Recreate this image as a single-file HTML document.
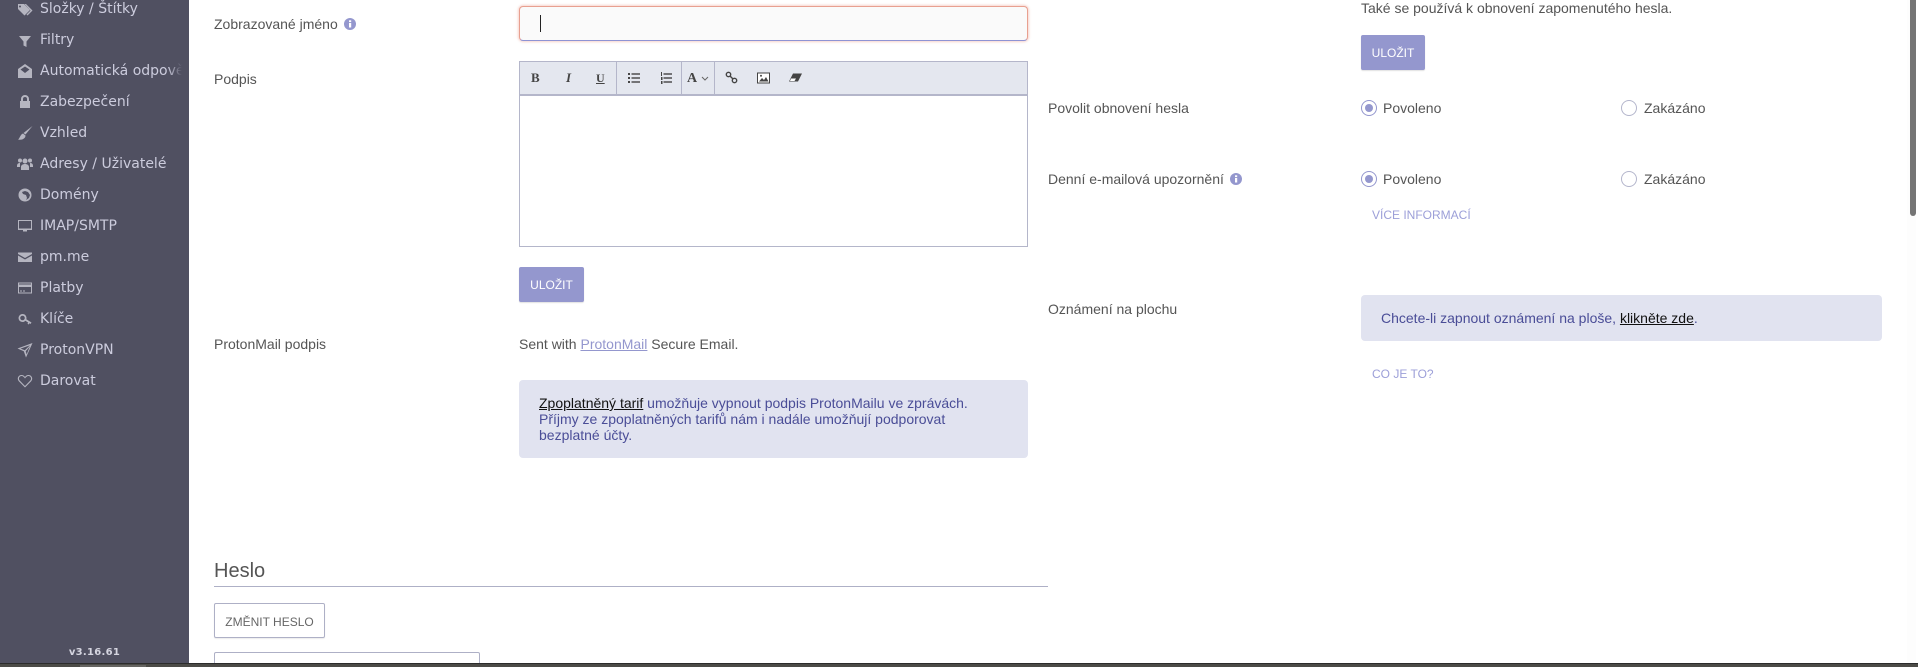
<!DOCTYPE html>
<html lang="cs"><head><meta charset="utf-8"><title>Nastavení</title>
<style>
html,body{margin:0;padding:0;width:1918px;height:667px;overflow:hidden;background:#fff}
body{position:relative;font-family:"Liberation Sans",sans-serif;font-size:14px;color:#555}
.a{position:absolute;white-space:nowrap}
#side{position:absolute;left:0;top:0;width:189px;height:663px;background:#505061;overflow:hidden}
.n{position:absolute;left:40px;font-family:"DejaVu Sans",sans-serif;font-size:14px;line-height:18px;color:#ccd;white-space:nowrap}
.i{position:absolute;left:17px;width:16px;height:16px;fill:#b5b5c0}
.t{line-height:16px}
.btn{position:absolute;background:#9497ce;color:#fff;font-size:12px;text-align:center;border-radius:2px;box-shadow:0 1px 1px rgba(0,0,0,.12)}
.ban{position:absolute;background:#e1e3f0;border-radius:4px;color:#4a4d97;line-height:16px}
.ban u{color:#111}
.r{position:absolute;width:14px;height:14px;border:1px solid #b4b6cc;border-radius:50%;background:#fff}
.r.on{border-color:#9497ce}
.r.on:after{content:"";position:absolute;left:3px;top:3px;width:8px;height:8px;border-radius:50%;background:#9497ce}
.l{color:#9c9fd8;font-size:12px;line-height:14px}
.tb{position:absolute;top:62px;height:32px;width:1px;background:#b4b6ca}
</style></head><body>

<div id="side">
<svg class="i" style="top:2px" viewBox="0 0 16 16"><path fill-rule="evenodd" d="M1 2h6l6 6-5.500 5.500L1 7zM3 3.500a1 1 0 100 2 1 1 0 000-2z"/><path d="M9 2l6.500 6.500-5 5-1-1 4-4L7.500 2z"/></svg>
<div class="n" style="top:0">Složky / Štítky</div>
<svg class="i" style="top:33px" viewBox="0 0 16 16"><path d="M2 3h12L9.500 8.500V14l-3-1.500v-4z"/></svg>
<div class="n" style="top:31px">Filtry</div>
<svg class="i" style="top:63px" viewBox="0 0 16 16"><path d="M8 1l7 5v9H1V6zM3.500 6.500L8 10l4.500-3.500L8 3.500z"/></svg>
<div class="n" style="width:142px;overflow:hidden;top:62px;-webkit-mask-image:linear-gradient(90deg,#000 90%,transparent);mask-image:linear-gradient(90deg,#000 90%,transparent)">Automatická odpověď</div>
<svg class="i" style="top:94px" viewBox="0 0 16 16"><path d="M4 7V5a4 4 0 018 0v2h1v7H3V7zm2 0h4V5a2 2 0 00-4 0z"/></svg>
<div class="n" style="top:93px">Zabezpečení</div>
<svg class="i" style="top:125px" viewBox="0 0 16 16"><path d="M15.500 1L8.500 9.500 6.500 8zM6 8.500l2.500 2c0 3-3.500 5-7.500 4 2-1 2-5 5-6z"/></svg>
<div class="n" style="top:124px">Vzhled</div>
<svg class="i" style="top:156px" viewBox="0 0 16 16"><circle cx="8" cy="5" r="2.500"/><circle cx="3" cy="4.500" r="2"/><circle cx="13" cy="4.500" r="2"/><path d="M4 14v-3c0-2 2-3 4-3s4 1 4 3v3zM0 10c0-2 1-3 3-3v4H0zM16 10c0-2-1-3-3-3v4h3z"/></svg>
<div class="n" style="top:155px">Adresy / Uživatelé</div>
<svg class="i" style="top:187px" viewBox="0 0 16 16"><path fill-rule="evenodd" d="M8 1.500a6.500 6.500 0 110 13 6.500 6.500 0 010-13zM8 4L5 5l1 2 3 1 1 3-1 2 3-2 1-3-2-3z"/></svg>
<div class="n" style="top:186px">Domény</div>
<svg class="i" style="top:218px" viewBox="0 0 16 16"><path fill-rule="evenodd" d="M1 2h14v10H10v1.500H6V12H1zM2 3v7.500h12V3z"/></svg>
<div class="n" style="top:217px">IMAP/SMTP</div>
<svg class="i" style="top:249px" viewBox="0 0 16 16"><path d="M1 3.500h14V5L8 9 1 5zM1 6.500L8 10.500l7-4V13H1z"/></svg>
<div class="n" style="top:248px">pm.me</div>
<svg class="i" style="top:280px" viewBox="0 0 16 16"><path fill-rule="evenodd" d="M1 2.500h14v11H1zM2 3.500v1h12v-1zM2 7v5.500h12V7zM3 10.500h2v1H3zM6 10.500h2v1H6z"/></svg>
<div class="n" style="top:279px">Platby</div>
<svg class="i" style="top:311px" viewBox="0 0 16 16"><path fill-rule="evenodd" d="M5.500 3a4 4 0 013.800 5.200l5.200 3.300-1 1.500-1-.7-.8 1.200-1.200-.8.700-1.100-2.800-1.800A4 4 0 115.500 3zm0 1.700a2.300 2.300 0 100 4.600 2.300 2.300 0 000-4.600z"/></svg>
<div class="n" style="top:310px">Klíče</div>
<svg class="i" style="top:342px" viewBox="0 0 16 16"><path d="M15.500 1L9 15.500 6.800 9.200 .5 6.500zM3.500 6.600l4.300 1.700L13 3.300zM8.700 9.200l1 3.200 3.200-8z"/></svg>
<div class="n" style="top:341px">ProtonVPN</div>
<svg class="i" style="top:373px" viewBox="0 0 16 16"><path d="M8 14.500L1.800 8.200C-.5 5.500 1.500 2 4.500 2 6 2 7.200 2.800 8 4c.8-1.200 2-2 3.500-2 3 0 5 3.500 2.700 6.200zm0-1.500l5.300-5.500C15 5.500 13.500 3 11.500 3 10 3 9 4 8 5.500 7 4 6 3 4.500 3 2.500 3 1 5.500 2.700 7.500z"/></svg>
<div class="n" style="top:372px">Darovat</div>
<div class="a" style="left:0;width:189px;text-align:center;top:646px;font-family:'DejaVu Sans',sans-serif;font-weight:700;font-size:10px;line-height:14px;color:#d5d5e0;letter-spacing:.3px">v3.16.61</div>
</div>

<!-- left column -->
<div class="a t" style="left:214px;top:16px">Zobrazované jméno</div>
<svg class="a" style="left:344px;top:18px" width="12" height="12" viewBox="0 0 12 12"><circle cx="6" cy="6" r="6" fill="#9497ce"/><rect x="5" y="5" width="2.200" height="4.500" fill="#fff"/><rect x="5" y="2.300" width="2.200" height="1.800" fill="#fff"/></svg>
<div class="a" style="left:519px;top:6px;width:507px;height:33px;background:#fafafa;border:1px solid #e8a090;border-bottom-color:#8f93d4;border-radius:4px;box-shadow:0 0 2px 1px rgba(230,130,110,.35)"></div>
<div class="a" style="left:540px;top:15px;width:1px;height:17px;background:#222"></div>
<div class="a t" style="left:214px;top:71px">Podpis</div>

<div class="a" style="left:519px;top:61px;width:507px;height:184px;border:1px solid #b4b6ca;background:#fff"></div>
<div class="a" style="left:520px;top:62px;width:507px;height:32px;background:#e4e7ef;border-bottom:2px solid #b4b6ca"></div>
<div class="tb" style="left:616px"></div><div class="tb" style="left:681px"></div><div class="tb" style="left:714px"></div>
<div class="a" style="left:531px;top:70px;font:700 13px/16px 'Liberation Serif',serif;color:#444">B</div>
<div class="a" style="left:566px;top:70px;font:italic 700 13px/16px 'Liberation Serif',serif;color:#444">I</div>
<div class="a" style="left:596px;top:70px;font:700 12px/16px 'Liberation Serif',serif;color:#444;text-decoration:underline">U</div>
<svg class="a" style="left:628px;top:72px" width="13" height="12" viewBox="0 0 13 12" fill="#444"><rect x="0" y="1" width="2" height="2"/><rect x="0" y="5" width="2" height="2"/><rect x="0" y="9" width="2" height="2"/><rect x="3.500" y="1.300" width="8.500" height="1.400"/><rect x="3.500" y="5.300" width="8.500" height="1.400"/><rect x="3.500" y="9.300" width="8.500" height="1.400"/></svg>
<svg class="a" style="left:660px;top:72px" width="13" height="12" viewBox="0 0 13 12" fill="#444"><rect x="1" y="0" width="1" height="4"/><rect x="1" y="5" width="1.500" height="3"/><rect x="1" y="9" width="1.500" height="3"/><rect x="3.500" y="1.300" width="8.500" height="1.400"/><rect x="3.500" y="5.300" width="8.500" height="1.400"/><rect x="3.500" y="9.300" width="8.500" height="1.400"/></svg>
<div class="a" style="left:687px;top:71px;font:700 14px/16px 'Liberation Serif',serif;color:#444">A</div>
<svg class="a" style="left:701px;top:76px" width="8" height="5" viewBox="0 0 8 5"><path d="M1 1l3 3 3-3" fill="none" stroke="#666"/></svg>
<svg class="a" style="left:725px;top:71px" width="13" height="13" viewBox="0 0 13 13" fill="none" stroke="#444" stroke-width="1.400"><circle cx="3.500" cy="3.500" r="2.200"/><circle cx="9.500" cy="9.500" r="2.200"/><path d="M5 5l3 3"/></svg>
<svg class="a" style="left:757px;top:72px" width="13" height="12" viewBox="0 0 13 12"><rect x=".5" y="1" width="12" height="10" fill="#fff" stroke="#444"/><path d="M2 9.500l3-3.500 2 2 2-3 2.500 4.500z" fill="#444"/><circle cx="4" cy="3.800" r="1" fill="#444"/></svg>
<svg class="a" style="left:789px;top:73px" width="13" height="10" viewBox="0 0 13 10"><path d="M4 .5h9L9 8.500H0z" fill="#444"/><path d="M2 5.500h5L5.500 8H1z" fill="#fff"/></svg>

<div class="btn" style="left:519px;top:267px;width:65px;height:35px;line-height:37px">ULOŽIT</div>
<div class="a t" style="left:214px;top:336px">ProtonMail podpis</div>
<div class="a t" style="left:519px;top:336px">Sent with <span style="color:#9497ce;text-decoration:underline">ProtonMail</span> Secure Email.</div>
<div class="ban" style="left:519px;top:380px;width:509px;height:78px"><div class="a" style="left:20px;top:15px"><u>Zpoplatněný tarif</u> umožňuje vypnout podpis ProtonMailu ve zprávách.<br>Příjmy ze zpoplatněných tarifů nám i nadále umožňují podporovat<br>bezplatné účty.</div></div>

<div class="a" style="left:214px;top:559px;font-size:20px;line-height:24px">Heslo</div>
<div class="a" style="left:214px;top:586px;width:834px;height:1px;background:#aeb0c6"></div>
<div class="a" style="left:214px;top:603px;width:109px;height:33px;border:1px solid #aeb0c6;border-radius:2px;text-align:center;font-size:12px;line-height:36px;color:#666;box-shadow:0 1px 1px rgba(0,0,0,.08)">ZMĚNIT HESLO</div>
<div class="a" style="left:214px;top:652px;width:264px;height:20px;border:1px solid #aeb0c6;border-radius:2px"></div>

<!-- right column -->
<div class="a t" style="left:1361px;top:0">Také se používá k obnovení zapomenutého hesla.</div>
<div class="btn" style="left:1361px;top:35px;width:64px;height:35px;line-height:36px">ULOŽIT</div>
<div class="a t" style="left:1048px;top:100px">Povolit obnovení hesla</div>
<div class="r on" style="left:1361px;top:100px"></div>
<div class="a t" style="left:1383px;top:100px">Povoleno</div>
<div class="r" style="left:1621px;top:100px"></div>
<div class="a t" style="left:1644px;top:100px">Zakázáno</div>
<div class="a t" style="left:1048px;top:171px">Denní e-mailová upozornění</div>
<svg class="a" style="left:1230px;top:173px" width="12" height="12" viewBox="0 0 12 12"><circle cx="6" cy="6" r="6" fill="#9497ce"/><rect x="5" y="5" width="2.200" height="4.500" fill="#fff"/><rect x="5" y="2.300" width="2.200" height="1.800" fill="#fff"/></svg>
<div class="r on" style="left:1361px;top:171px"></div>
<div class="a t" style="left:1383px;top:171px">Povoleno</div>
<div class="r" style="left:1621px;top:171px"></div>
<div class="a t" style="left:1644px;top:171px">Zakázáno</div>
<div class="a l" style="left:1372px;top:208px">VÍCE INFORMACÍ</div>
<div class="a t" style="left:1048px;top:301px">Oznámení na plochu</div>
<div class="ban" style="left:1361px;top:295px;width:521px;height:46px"><div class="a" style="left:20px;top:15px">Chcete-li zapnout oznámení na ploše, <u>klikněte zde</u>.</div></div>
<div class="a l" style="left:1372px;top:367px">CO JE TO?</div>

<!-- scrollbar -->
<div class="a" style="left:1907px;top:0;width:9px;height:663px;background:#fdfdfd"></div>
<div class="a" style="left:1910px;top:0;width:6px;height:216px;background:#757575;border-radius:0 0 3px 3px"></div>

<!-- bottom bar -->
<div class="a" style="left:0;top:663px;width:1918px;height:4px;background:#4c4b47;border-top:1px solid #2c2c2c;box-sizing:border-box"></div>
<div class="a" style="left:80px;top:665px;width:66px;height:2px;background:#666562"></div>
</body></html>
